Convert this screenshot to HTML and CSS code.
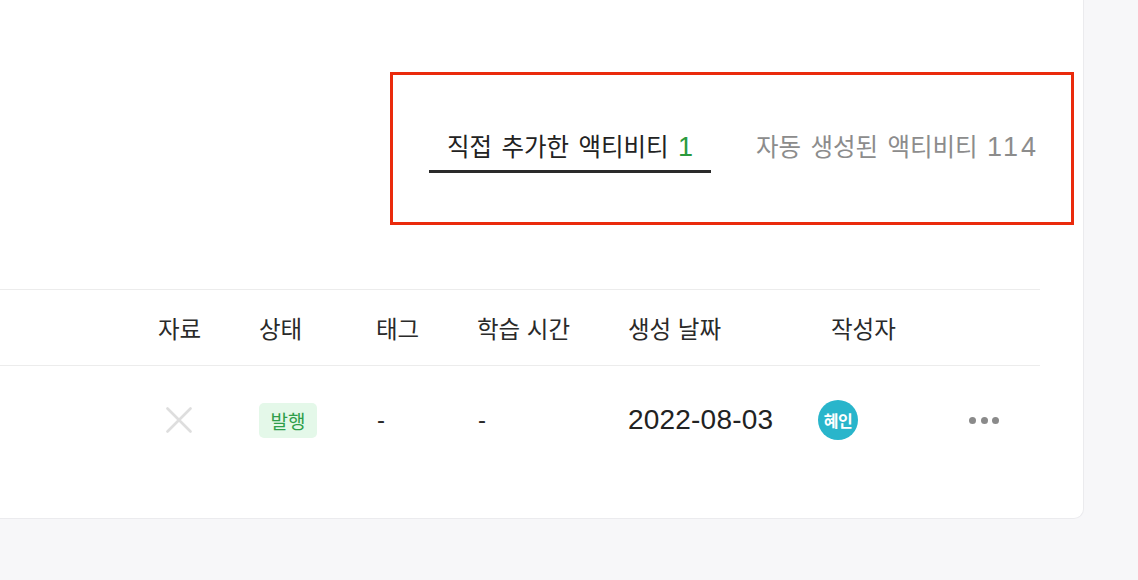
FILE: index.html
```html
<!DOCTYPE html>
<html lang="ko">
<head>
<meta charset="utf-8">
<title>액티비티</title>
<link rel="stylesheet" href="styles.css">
</head>
<body>
<div class="card">
  <div class="tabs">
    <div class="tab active">직접 추가한 액티비티 <span class="num green">1</span></div>
    <div class="tab">자동 생성된 액티비티 <span class="num">114</span></div>
  </div>
  <div class="table">
    <div class="row head">
      <div class="cell"></div>
      <div class="cell">자료</div>
      <div class="cell">상태</div>
      <div class="cell">태그</div>
      <div class="cell">학습 시간</div>
      <div class="cell">생성 날짜</div>
      <div class="cell author-h">작성자</div>
      <div class="cell"></div>
    </div>
    <div class="row body">
      <div class="cell"></div>
      <div class="cell">
        <svg class="x-icon" width="26" height="26" viewBox="0 0 26 26"><path d="M1.5 1.5 L24.5 24.5 M24.5 1.5 L1.5 24.5" stroke="#dedede" stroke-width="2.6" stroke-linecap="round" fill="none"/></svg>
      </div>
      <div class="cell"><span class="badge">발행</span></div>
      <div class="cell dash">-</div>
      <div class="cell dash">-</div>
      <div class="cell date">2022-08-03</div>
      <div class="cell"><span class="avatar">혜인</span></div>
      <div class="cell"><span class="more"><i></i><i></i><i></i></span></div>
    </div>
  </div>
</div>
<div class="highlight"></div>
</body>
</html>
```
FILE: styles.css
```css
* { box-sizing: border-box; }
html, body { margin: 0; padding: 0; }
body {
  background: #f7f7f9;
  width: 1138px;
  height: 580px;
  overflow: hidden;
  font-family: "Noto Sans CJK KR", "Noto Sans", sans-serif;
  color: #262626;
  position: relative;
}
.card {
  width: 1084px;
  height: 519px;
  background: #ffffff;
  border-right: 1px solid #ebebee;
  border-bottom: 1px solid #ebebee;
  border-bottom-right-radius: 10px;
  padding-top: 124px;
}
.tabs {
  display: flex;
  justify-content: flex-end;
  gap: 27px;
  padding-right: 29px;
}
.tab {
  font-size: 24.5px;
  line-height: 44px;
  height: 49px;
  padding: 0 18px 2px;
  word-spacing: 2.5px;
  color: #8c8c8c;
  border-bottom: 3px solid transparent;
  white-space: nowrap;
}
.tab.active {
  color: #222222;
  border-bottom-color: #2a2a2a;
}
.num {
  font-family: "Liberation Sans", "Noto Sans", sans-serif;
  font-size: 27px;
  letter-spacing: 3px;
  margin-right: -3px;
  word-spacing: 0;
}
.green { color: #2a9a3c; }
.table {
  width: 1040px;
  margin-top: 116px;
  border-top: 1px solid #ececec;
}
.row {
  display: grid;
  grid-template-columns: 158px 101px 117px 101px 151px 190px 151px 71px;
  align-items: center;
}
.row.head {
  height: 76px;
  border-bottom: 1px solid #ececec;
  font-size: 23.5px;
  color: #2a2a2a;
}
.row.body {
  height: 108px;
}
.row.head .author-h { padding-left: 13px; }
.x-icon { display: block; margin-left: 8px; }
.badge {
  display: inline-block;
  width: 58px;
  height: 35px;
  line-height: 35px;
  text-align: center;
  font-size: 19px;
  color: #2f9e4a;
  background: #e4f8e9;
  border-radius: 5px;
}
.dash {
  font-family: "Liberation Sans", sans-serif;
  font-size: 24px;
  padding-left: 1px;
  color: #2a2a2a;
}
.date {
  font-family: "Liberation Sans", sans-serif;
  font-size: 28px;
  letter-spacing: 0.2px;
  color: #222222;
}
.avatar {
  display: flex;
  align-items: center;
  justify-content: center;
  width: 40px;
  height: 40px;
  border-radius: 50%;
  background: #29b5cb;
  color: #ffffff;
  font-size: 16px;
  font-weight: 700;
  letter-spacing: -0.5px;
}
.more {
  display: flex;
  gap: 4.5px;
}
.more i {
  display: block;
  width: 7px;
  height: 7px;
  border-radius: 50%;
  background: #8a8a8a;
}
.highlight {
  position: absolute;
  left: 390px;
  top: 72px;
  width: 684px;
  height: 153px;
  border: 3px solid #ea2a0c;
}
```
